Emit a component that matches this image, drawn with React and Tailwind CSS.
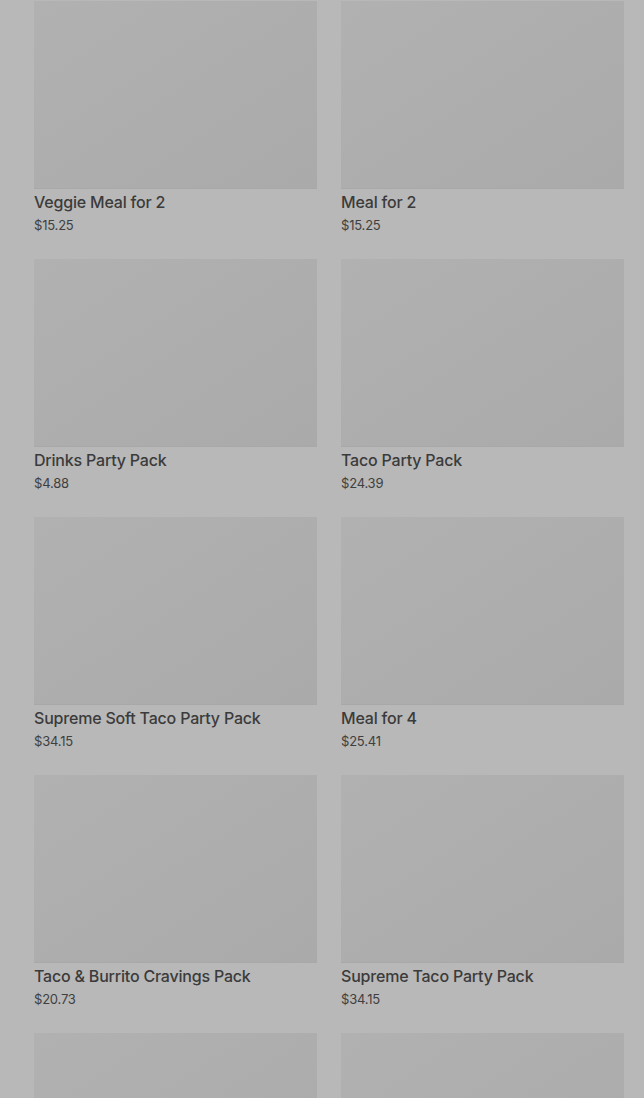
const products = [
  { name: 'Veggie Meal for 2', price: '$15.25' },
  { name: 'Meal for 2', price: '$15.25' },
  { name: 'Drinks Party Pack', price: '$4.88' },
  { name: 'Taco Party Pack', price: '$24.39' },
  { name: 'Supreme Soft Taco Party Pack', price: '$34.15' },
  { name: 'Meal for 4', price: '$25.41' },
  { name: 'Taco & Burrito Cravings Pack', price: '$20.73' },
  { name: 'Supreme Taco Party Pack', price: '$34.15' },
  { name: null, price: null },
  { name: null, price: null },
];

const ProductCard = ({ item }) => (
  <div className="flex flex-col">
    <div className="h-[188px] bg-gradient-to-br from-[#b1b1b1] to-[#aaaaaa] border-b border-[#a8a8a8]" />
    {item.name && (
      <>
        <p className="mt-[2px] text-[16px] leading-[22px] font-medium text-[#3b3b3b] tracking-[-0.2px]">{item.name}</p>
        <p className="mt-[2px] text-[13px] leading-[20px] text-[#3f3f3f] tracking-[-0.2px]">{item.price}</p>
      </>
    )}
  </div>
);

export default function App() {
  return (
    <div className="h-screen bg-[#b8b8b8] overflow-hidden" style={{ fontFamily: 'Inter, "Noto Sans", sans-serif' }}>
      <div className="pt-px pl-[34px] pr-[20px] grid grid-cols-2 gap-x-[24px] gap-y-[24px]">
        {products.map((p, i) => (
          <ProductCard key={i} item={p} />
        ))}
      </div>
    </div>
  );
}
